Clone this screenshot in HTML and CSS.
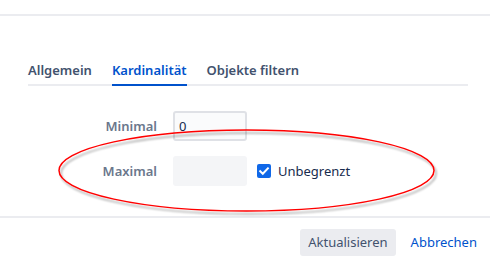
FILE: index.html
```html
<!DOCTYPE html>
<html lang="de">
<head>
<meta charset="utf-8">
<title>Kardinalität</title>
<link rel="stylesheet" href="styles.css">
</head>
<body>
<div class="dialog">
  <div class="topbar"></div>
  <main class="content">
    <nav class="tabs">
      <span class="tab">Allgemein</span>
      <span class="tab active">Kardinalität</span>
      <span class="tab">Objekte filtern</span>
    </nav>
    <div class="form">
      <label class="label">Minimal</label>
      <div class="field"><span class="input">0</span></div>
      <label class="label">Maximal</label>
      <div class="field">
        <span class="input disabled"></span>
        <span class="check">
          <span class="box"><svg width="14" height="14" viewBox="0 0 14 14"><path d="M3.2 7.2 L5.8 9.8 L10.9 4.3" fill="none" stroke="#fff" stroke-width="2" stroke-linecap="square"/></svg></span>
          <span class="check-label">Unbegrenzt</span>
        </span>
      </div>
    </div>
  </main>
  <footer class="footer">
    <span class="btn">Aktualisieren</span>
    <span class="link">Abbrechen</span>
  </footer>
  <svg class="annotation" width="490" height="264" viewBox="0 0 490 264">
    <defs>
      <filter id="sh" x="-10%" y="-30%" width="120%" height="160%">
        <feGaussianBlur in="SourceAlpha" stdDeviation="1.2"/>
        <feOffset dx="2" dy="2.5" result="b"/>
        <feComponentTransfer><feFuncA type="linear" slope="0.35"/></feComponentTransfer>
        <feMerge><feMergeNode/><feMergeNode in="SourceGraphic"/></feMerge>
      </filter>
    </defs>
    <ellipse cx="246.5" cy="170.5" rx="187.5" ry="40.5" fill="none" stroke="#ff0000" stroke-width="1.5" filter="url(#sh)"/>
  </svg>
</div>
</body>
</html>
```
FILE: styles.css
```css
html, body {
  margin: 0;
  padding: 0;
  background: #fff;
}
body {
  font-family: "Noto Sans", "Open Sans", sans-serif;
  font-size: 13px;
  line-height: 20px;
  color: #172b4d;
}
.dialog {
  position: relative;
  width: 490px;
  height: 264px;
  overflow: hidden;
}
.topbar {
  height: 14px;
  border-bottom: 2px solid #ebecf0;
}
.content {
  padding: 0 22px 0 28px;
}
.tabs {
  margin-top: 44px;
  display: flex;
  gap: 20px;
  border-bottom: 2px solid #ebecf0;
}
.tab {
  font-weight: 600;
  color: #42526e;
  padding-bottom: 4px;
  border-bottom: 2px solid transparent;
  margin-bottom: -2px;
}
.tab.active {
  color: #0052cc;
  border-bottom-color: #0052cc;
}
.form {
  margin-top: 25px;
  display: grid;
  grid-template-columns: 129px auto;
  grid-auto-rows: 30px;
  column-gap: 16px;
  row-gap: 15px;
  align-items: center;
}
.label {
  text-align: right;
  font-weight: 600;
  color: #6b778c;
}
.field {
  display: flex;
  align-items: center;
  height: 30px;
}
.input {
  box-sizing: border-box;
  width: 74px;
  height: 30px;
  border: 2px solid #dfe1e6;
  border-radius: 3px;
  background: #fafbfc;
  padding: 3px 4px;
  color: #172b4d;
}
.input.disabled {
  background: #f4f5f7;
  border-color: #f4f5f7;
}
.check {
  display: flex;
  align-items: center;
  margin-left: 10px;
  gap: 7px;
}
.box {
  width: 14px;
  height: 14px;
  border-radius: 2px;
  background: #1068e8;
  display: block;
}
.box svg {
  display: block;
}
.check-label {
  color: #172b4d;
}
.footer {
  margin-top: 30px;
  border-top: 2px solid #ebecf0;
  padding: 11px 13px 0 0;
  display: flex;
  justify-content: flex-end;
  align-items: center;
  gap: 15px;
}
.btn {
  height: 27px;
  line-height: 27px;
  padding: 0 8px;
  background: #ebecf0;
  border-radius: 3px;
  color: #42526e;
}
.link {
  color: #0052cc;
  line-height: 27px;
}
.annotation {
  position: absolute;
  left: 0;
  top: 0;
  pointer-events: none;
}
```
